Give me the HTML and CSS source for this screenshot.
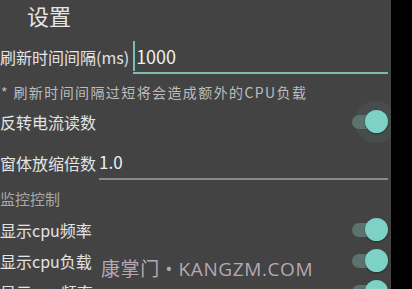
FILE: index.html
```html
<!DOCTYPE html>
<html lang="zh">
<head>
<meta charset="utf-8">
<link rel="stylesheet" href="styles.css">
</head>
<body>
<div class="screen">
  <div class="title">设置</div>
  <div class="field f1">
    <span class="label">刷新时间间隔(ms)</span>
    <div class="input active"><span class="caret"></span><span class="val">1000</span></div>
  </div>
  <div class="note">* 刷新时间间隔过短将会造成额外的CPU负载</div>
  <div class="srow r1">
    <span class="label">反转电流读数</span>
    <span class="switch halo"><span class="track"></span><span class="thumb"></span></span>
  </div>
  <div class="field f2">
    <span class="label">窗体放缩倍数</span>
    <div class="input"><span class="val v2">1.0</span></div>
  </div>
  <div class="section">监控控制</div>
  <div class="srow">
    <span class="label">显示cpu频率</span>
    <span class="switch"><span class="track"></span><span class="thumb"></span></span>
  </div>
  <div class="srow">
    <span class="label">显示cpu负载</span>
    <span class="switch"><span class="track"></span><span class="thumb"></span></span>
  </div>
  <div class="srow">
    <span class="label">显示gpu频率</span>
    <span class="switch"><span class="track"></span><span class="thumb"></span></span>
  </div>
  <div class="watermark">康掌门 • KANGZM.COM</div>
</div>
</body>
</html>
```
FILE: styles.css
```css
html, body {
  margin: 0;
  padding: 0;
  background: #000;
}
body {
  width: 412px;
  height: 289px;
  overflow: hidden;
  font-family: "Noto Sans CJK SC", "Noto Sans", "Liberation Sans", sans-serif;
}
.screen {
  position: relative;
  width: 391px;
  height: 289px;
  background: #434343;
  overflow: hidden;
  color: #e2e2e2;
}
.title {
  height: 32px;
  padding-top: 1px;
  box-sizing: border-box;
  line-height: 28px;
  padding-left: 27px;
  font-size: 22px;
  color: #e6e6e6;
}
.label {
  font-size: 16px;
  white-space: nowrap;
  color: #e4e4e4;
}
.field {
  display: flex;
  align-items: flex-end;
}
.f1 {
  height: 42px;
}
.f1 .label {
  line-height: 22px;
  margin-bottom: 6px;
}
.input {
  flex: 1;
  margin-left: 4px;
  margin-right: 3px;
  border-bottom: 2px solid #8a8a8a;
  display: flex;
  align-items: center;
}
.input.active {
  border-bottom-color: #7cbcb2;
  height: 32px;
}
.caret {
  width: 2px;
  height: 30px;
  background: #7cbcb2;
  margin-right: 1px;
}
.val {
  font-size: 18px;
  color: #f0f0f0;
  line-height: 24px;
}
.note {
  height: 34px;
  line-height: 36px;
  font-size: 14px;
  letter-spacing: 1.4px;
  color: #bdbdbd;
  padding-left: 1px;
  white-space: nowrap;
}
.srow {
  display: flex;
  align-items: center;
  justify-content: space-between;
  height: 31px;
}
.r1 {
  height: 28px;
}
.switch {
  position: relative;
  width: 36px;
  height: 24px;
  margin-right: 3px;
}
.track {
  position: absolute;
  left: 0;
  top: 5px;
  width: 32px;
  height: 14px;
  border-radius: 7px;
  background: #5b736f;
}
.thumb {
  position: absolute;
  right: 0;
  top: 0;
  width: 23px;
  height: 23px;
  border-radius: 50%;
  background: #7dd2c8;
  box-shadow: 0 1px 2px rgba(0,0,0,0.35);
}
.halo::before {
  content: "";
  position: absolute;
  right: -9px;
  top: -9px;
  width: 42px;
  height: 42px;
  border-radius: 50%;
  background: rgba(125, 210, 200, 0.08);
}
.f2 {
  height: 44px;
}
.f2 .label {
  line-height: 22px;
  margin-bottom: 6px;
}
.f2 .input {
  height: 30px;
  margin-left: 3px;
}
.v2 {
  font-size: 17px;
  margin-top: -3px;
}
.section {
  height: 34px;
  line-height: 38px;
  font-size: 15px;
  color: #a8a8a8;
}
.watermark {
  position: absolute;
  left: 101px;
  top: 254px;
  font-size: 19px;
  letter-spacing: 0.6px;
  color: #b6a8b5;
  font-family: "Open Sans", "Noto Sans CJK SC", sans-serif;
}
```
